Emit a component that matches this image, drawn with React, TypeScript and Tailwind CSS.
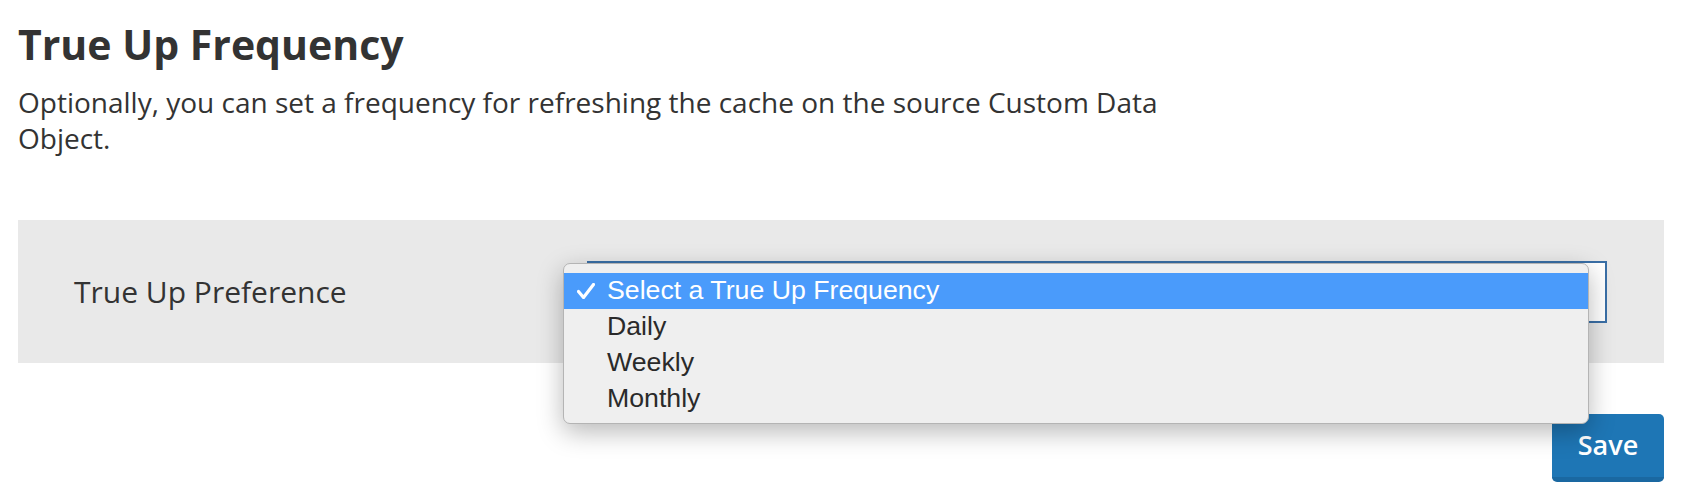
const options = ['Select a True Up Frequency', 'Daily', 'Weekly', 'Monthly'];

function CheckMark() {
  return (
    <svg width="18" height="16" viewBox="0 0 18 16" className="shrink-0">
      <path d="M1.5 8.5 L6.5 14.5 L16.5 1.5" fill="none" stroke="white" strokeWidth="3.2" strokeLinecap="round" strokeLinejoin="round" />
    </svg>
  );
}

function SelectMenu() {
  return (
    <div className="absolute left-[-26px] top-0 w-[1026px] h-[161px] py-[9px] rounded-[7px] bg-[#efefef] border border-[#b4b4b4] shadow-[0_8px_26px_rgba(0,0,0,0.28)] font-['Liberation_Sans',Arial,sans-serif] text-[26.7px] text-[#2a2a2a]">
      {options.map((opt, i) => (
        <div
          key={opt}
          className={i === 0 ? 'h-[36px] flex items-center bg-[#4a9bfb] text-white' : 'h-[36px] flex items-center'}
        >
          <div className="w-[43px] pl-[13px] flex items-center">{i === 0 && <CheckMark />}</div>
          <span>{opt}</span>
        </div>
      ))}
    </div>
  );
}

export default function App() {
  return (
    <div className="w-[1686px] h-[500px] bg-white pl-[18px] pr-[22px] pt-[22px] font-['Open_Sans',sans-serif] text-[#333]">
      <h1 className="text-[41px] leading-[45px] font-bold">True Up Frequency</h1>
      <p className="mt-[17px] w-[1170px] text-[28px] leading-[36px]">
        Optionally, you can set a frequency for refreshing the cache on the source Custom Data Object.
      </p>

      <div className="mt-[64px] h-[143px] bg-[#e9e9e9] flex items-center pl-[56px] pr-[57px]">
        <label className="flex-1 text-[30px]">True Up Preference</label>
        <div className="relative w-[1020px] h-[62px] bg-white border-2 border-[#3a6fa6]">
          <SelectMenu />
        </div>
      </div>

      <div className="flex justify-end mt-[51px]">
        <button className="w-[112px] h-[68px] rounded-[5px] bg-[#1e76b5] border-b-[5px] border-[#1a68a1] text-white text-[27px] font-semibold">
          Save
        </button>
      </div>
    </div>
  );
}
